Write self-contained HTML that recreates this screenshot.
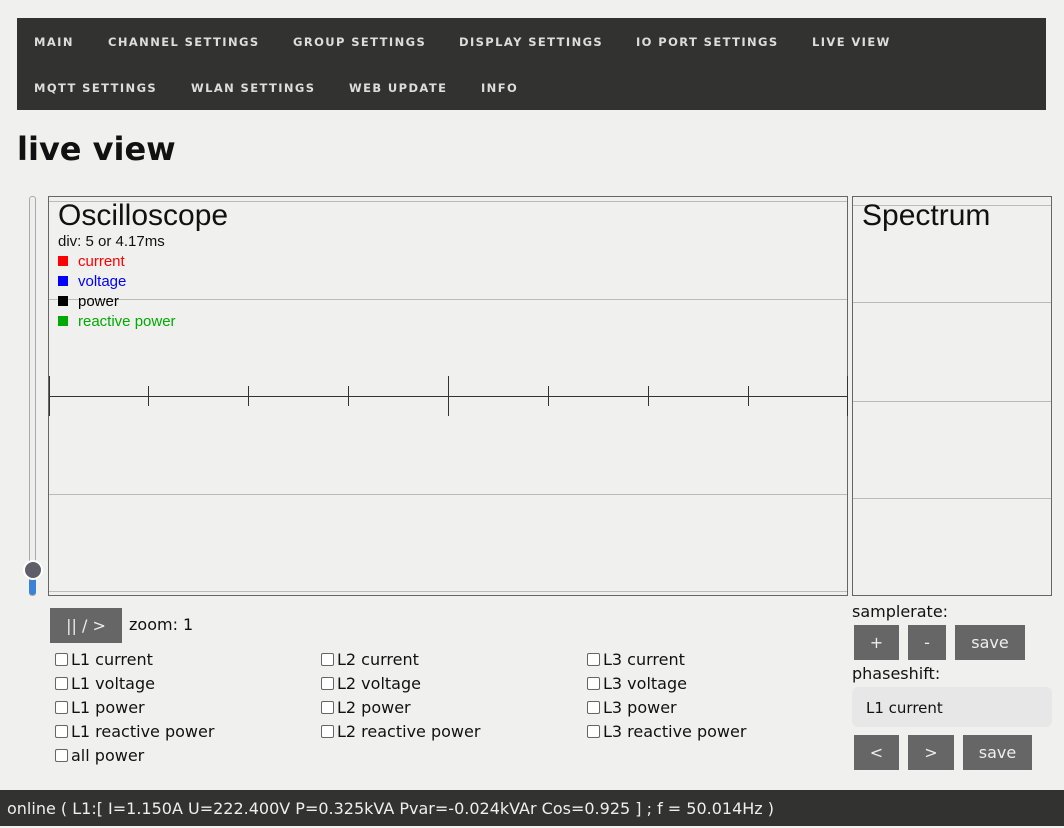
<!DOCTYPE html>
<html><head><style>
body{margin:0;background:#f0f0ef;width:1064px;height:826px;overflow:hidden;position:relative;font-family:"DejaVu Sans",sans-serif;color:#111}
.nav{position:absolute;left:17px;top:18px;width:1029px;height:92px;background:#323230}
.nav span{position:absolute;color:#ddd;font-weight:bold;font-size:11.5px;letter-spacing:1.4px;white-space:nowrap;line-height:12px}
h1{position:absolute;left:17px;top:130px;margin:0;font-size:32px;font-weight:bold;line-height:38px}
.abs{position:absolute}
.btn{position:absolute;background:#666;color:#eee;font-size:16px;text-align:center}
.cb{position:absolute;font-size:16px;white-space:nowrap;line-height:18px}
.cb i{display:inline-block;width:11px;height:11px;border:1px solid #666;border-radius:2px;background:#fff;vertical-align:-1px;margin-right:3px}
.leg{position:absolute;left:58px;font-family:"Liberation Sans",sans-serif;font-size:15px;line-height:16px}
.leg b{display:inline-block;width:10px;height:10px;margin-right:10px;vertical-align:0px}
</style></head><body>
<div class="nav">
<span style="left:17px;top:18px">MAIN</span>
<span style="left:91px;top:18px">CHANNEL SETTINGS</span>
<span style="left:276px;top:18px">GROUP SETTINGS</span>
<span style="left:442px;top:18px">DISPLAY SETTINGS</span>
<span style="left:619px;top:18px">IO PORT SETTINGS</span>
<span style="left:795px;top:18px">LIVE VIEW</span>
<span style="left:17px;top:64px">MQTT SETTINGS</span>
<span style="left:174px;top:64px">WLAN SETTINGS</span>
<span style="left:332px;top:64px">WEB UPDATE</span>
<span style="left:464px;top:64px">INFO</span>
</div>
<h1>live view</h1>
<div class="abs" style="left:29px;top:196px;width:5px;height:398px;border:1px solid #aaa;border-radius:3px;background:#eee"></div>
<div class="abs" style="left:29px;top:572px;width:7px;height:23px;background:#3b82d6;border-radius:3px"></div>
<div class="abs" style="left:23px;top:560px;width:16px;height:16px;border-radius:50%;background:#5f5f6a;border:2px solid #fff"></div>
<svg class="abs" style="left:0;top:0" width="1064" height="600">
<rect x="48.5" y="196.5" width="799" height="399" fill="none" stroke="#666"/>
<g stroke="#bbb"><line x1="49" x2="847" y1="201.5" y2="201.5"/><line x1="49" x2="847" y1="299.5" y2="299.5"/><line x1="49" x2="847" y1="494.5" y2="494.5"/><line x1="49" x2="847" y1="591.5" y2="591.5"/></g>
<g stroke="#333"><line x1="49" x2="847" y1="396.5" y2="396.5"/>
<line x1="49.5" x2="49.5" y1="376" y2="416"/><line x1="847.5" x2="847.5" y1="376" y2="416"/><line x1="448.5" x2="448.5" y1="376" y2="416"/>
<line x1="148.5" x2="148.5" y1="386" y2="406"/><line x1="248.5" x2="248.5" y1="386" y2="406"/><line x1="348.5" x2="348.5" y1="386" y2="406"/><line x1="548.5" x2="548.5" y1="386" y2="406"/><line x1="648.5" x2="648.5" y1="386" y2="406"/><line x1="748.5" x2="748.5" y1="386" y2="406"/></g>
<rect x="852.5" y="196.5" width="199" height="399" fill="none" stroke="#666"/>
<g stroke="#bbb"><line x1="853" x2="1051" y1="205.5" y2="205.5"/><line x1="853" x2="1051" y1="302.5" y2="302.5"/><line x1="853" x2="1051" y1="401.5" y2="401.5"/><line x1="853" x2="1051" y1="498.5" y2="498.5"/></g>
</svg>
<div class="abs" style="left:58px;top:199px;font-family:'Liberation Sans',sans-serif;font-size:30px;line-height:34px">Oscilloscope</div>
<div class="abs" style="left:58px;top:234px;font-family:'Liberation Sans',sans-serif;font-size:15px;line-height:16px">div: 5 or 4.17ms</div>
<div class="leg" style="top:254px;color:#f00"><b style="background:#f00"></b>current</div>
<div class="leg" style="top:274px;color:#00f"><b style="background:#00f"></b>voltage</div>
<div class="leg" style="top:294px;color:#000"><b style="background:#000"></b>power</div>
<div class="leg" style="top:314px;color:#0a0"><b style="background:#0a0"></b>reactive power</div>
<div class="abs" style="left:862px;top:199px;font-family:'Liberation Sans',sans-serif;font-size:30px;line-height:34px">Spectrum</div>
<div class="btn" style="left:50px;top:608px;width:72px;height:35px;line-height:35px">|| / &gt;</div>
<div class="abs" style="left:129px;top:616px;font-size:16px;line-height:18px">zoom: 1</div>
<div class="cb" style="left:55px;top:651px"><i></i>L1 current</div>
<div class="cb" style="left:55px;top:675px"><i></i>L1 voltage</div>
<div class="cb" style="left:55px;top:699px"><i></i>L1 power</div>
<div class="cb" style="left:55px;top:723px"><i></i>L1 reactive power</div>
<div class="cb" style="left:55px;top:747px"><i></i>all power</div>
<div class="cb" style="left:321px;top:651px"><i></i>L2 current</div>
<div class="cb" style="left:321px;top:675px"><i></i>L2 voltage</div>
<div class="cb" style="left:321px;top:699px"><i></i>L2 power</div>
<div class="cb" style="left:321px;top:723px"><i></i>L2 reactive power</div>
<div class="cb" style="left:587px;top:651px"><i></i>L3 current</div>
<div class="cb" style="left:587px;top:675px"><i></i>L3 voltage</div>
<div class="cb" style="left:587px;top:699px"><i></i>L3 power</div>
<div class="cb" style="left:587px;top:723px"><i></i>L3 reactive power</div>
<div class="abs" style="left:852px;top:603px;font-size:16px;line-height:18px">samplerate:</div>
<div class="btn" style="left:854px;top:625px;width:45px;height:35px;line-height:35px">+</div>
<div class="btn" style="left:908px;top:625px;width:38px;height:35px;line-height:35px">-</div>
<div class="btn" style="left:955px;top:625px;width:70px;height:35px;line-height:35px">save</div>
<div class="abs" style="left:852px;top:665px;font-size:16px;line-height:18px">phaseshift:</div>
<div class="abs" style="left:852px;top:687px;width:200px;height:40px;background:#e6e7e6;border-radius:6px;font-size:15px;line-height:42px;text-indent:14px">L1 current</div>
<div class="btn" style="left:854px;top:735px;width:45px;height:35px;line-height:35px">&lt;</div>
<div class="btn" style="left:908px;top:735px;width:46px;height:35px;line-height:35px">&gt;</div>
<div class="btn" style="left:963px;top:735px;width:69px;height:35px;line-height:35px">save</div>
<div class="abs" style="left:0;top:790px;width:1064px;height:36px;background:#323230;color:#eee;font-size:16px;line-height:38px;text-indent:7px;white-space:nowrap">online ( L1:[ I=1.150A U=222.400V P=0.325kVA Pvar=-0.024kVAr Cos=0.925 ] ; f = 50.014Hz )</div>
</body></html>
